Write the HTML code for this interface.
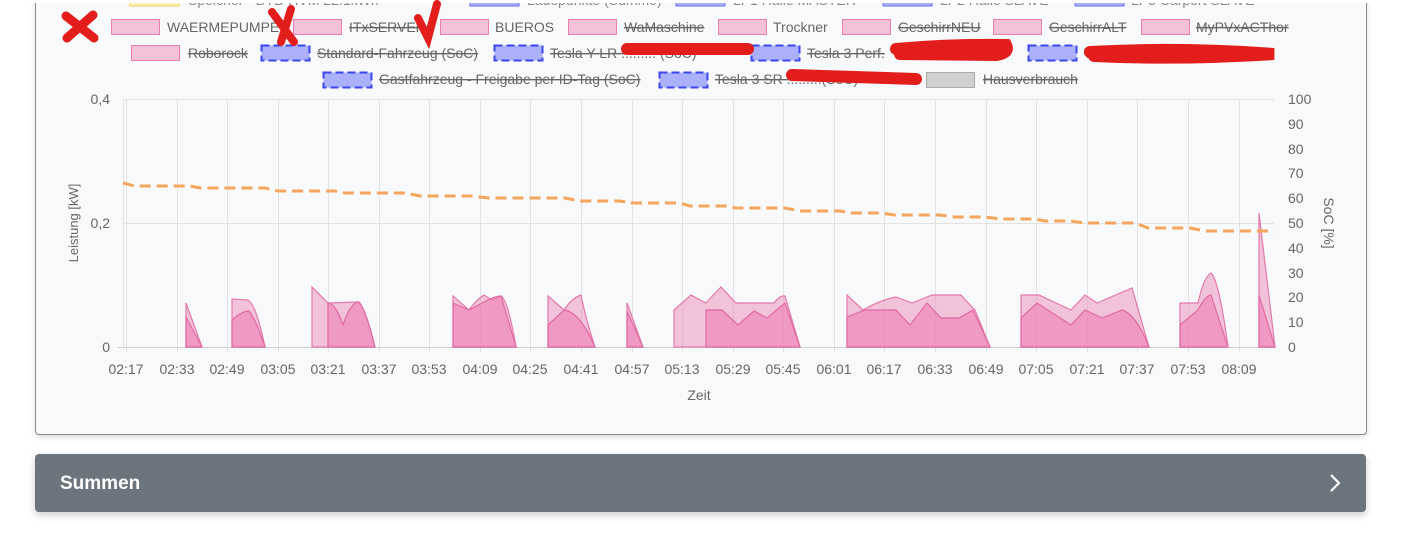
<!DOCTYPE html>
<html><head><meta charset="utf-8"><style>
html,body{margin:0;padding:0;background:#fff;width:1405px;height:547px;overflow:hidden;font-family:"Liberation Sans",sans-serif}
.card{position:absolute;left:35px;top:-10px;width:1330px;height:443px;background:#f8f9fa;border:1px solid #8a8a8a;border-radius:4px;box-shadow:0 2px 6px rgba(0,0,0,.15)}
.sum{position:absolute;left:35px;top:454px;width:1331px;height:58px;background:#6c757d;border-radius:4px;box-shadow:0 3px 8px rgba(0,0,0,.2)}
.sum span{position:absolute;left:25px;top:19px;color:#fff;font-weight:bold;font-size:19px}
svg{position:absolute;left:0;top:0}
</style></head><body>
<div class="card"></div>
<div class="sum"><span>Summen</span>
<svg style="left:1290px;top:18px" width="20" height="22"><path d="M6 3 L14 11 L6 19" fill="none" stroke="#fff" stroke-width="2.2"/></svg></div>
<svg width="1405" height="440" font-family="Liberation Sans, sans-serif">
<g font-size="14" fill="#666">
<rect x="130" y="-8" width="49" height="14" fill="#fdf3b8" stroke="#f0d060"/>
<rect x="470" y="-8" width="49" height="14" fill="#aab0fa" stroke="#6870ee"/>
<rect x="676" y="-8" width="49" height="14" fill="#aab0fa" stroke="#6870ee"/>
<rect x="883" y="-8" width="49" height="14" fill="#aab0fa" stroke="#6870ee"/>
<rect x="1075" y="-8" width="49" height="14" fill="#aab0fa" stroke="#6870ee"/>
<text x="188" y="5" fill="#888">Speicher - BYD HVM 22.1kWh</text>
<text x="527" y="5" fill="#888">Ladepunkte (Summe)</text>
<text x="733" y="5" fill="#888">LP1 Halle MASTER</text>
<text x="940" y="5" fill="#888">LP2 Halle SLAVE</text>
<text x="1131" y="5" fill="#888">LP3 Carport SLAVE</text>
<rect x="0" y="0" width="1405" height="3" fill="#fff"/>
<g fill="#f4c1d9" stroke="#e87fae">
<rect x="111.5" y="19.5" width="48" height="15"/><rect x="293.5" y="19.5" width="48" height="15"/><rect x="440.5" y="19.5" width="48" height="15"/><rect x="568.5" y="19.5" width="48" height="15"/><rect x="718.5" y="19.5" width="48" height="15"/><rect x="842.5" y="19.5" width="48" height="15"/><rect x="993.5" y="19.5" width="48" height="15"/><rect x="1141.5" y="19.5" width="48" height="15"/>
<rect x="131.5" y="45.5" width="48" height="15"/>
</g>
<text x="167" y="32">WAERMEPUMPE</text>
<text x="349" y="32" text-decoration="line-through">ITxSERVER</text>
<text x="495" y="32">BUEROS</text>
<text x="624" y="32" text-decoration="line-through">WaMaschine</text>
<text x="773" y="32">Trockner</text>
<text x="898" y="32" text-decoration="line-through">GeschirrNEU</text>
<text x="1049" y="32" text-decoration="line-through">GeschirrALT</text>
<text x="1196" y="32" text-decoration="line-through">MyPVxACThor</text>
<g fill="#aab0fa" stroke="#3a47ee" stroke-width="2" stroke-dasharray="8,4">
<rect x="261.5" y="45.5" width="48" height="15"/><rect x="494.5" y="45.5" width="48" height="15"/><rect x="751.5" y="45.5" width="48" height="15"/><rect x="1028.5" y="45.5" width="48" height="15"/>
<rect x="323.5" y="72.5" width="48" height="15"/><rect x="659.5" y="72.5" width="48" height="15"/>
</g>
<rect x="926.5" y="72.5" width="48" height="15" fill="#d0d0d0" stroke="#aaa"/>
<text x="188" y="58" text-decoration="line-through">Roborock</text>
<text x="317" y="58" text-decoration="line-through">Standard-Fahrzeug (SoC)</text>
<text x="550" y="58" text-decoration="line-through">Tesla Y LR ......... (SoC)</text>
<text x="807" y="58" text-decoration="line-through">Tesla 3 Perf.</text>
<text x="1084" y="58" text-decoration="line-through">W...................... (SoC)</text>
<text x="379" y="84" text-decoration="line-through">Gastfahrzeug - Freigabe per ID-Tag (SoC)</text>
<text x="715" y="84" text-decoration="line-through">Tesla 3 SR .........(SoC)</text>
<text x="983" y="84" text-decoration="line-through">Hausverbrauch</text>
</g>
<g stroke="#e31c1c" stroke-linecap="round" fill="none">
<path d="M66 16 L94 38 M93 15 L67 38" stroke-width="9"/>
<path d="M272 12 L294 42 M291 9 L281 42" stroke-width="8"/>
<path d="M418 18 L428 38 L437 4" stroke-width="8"/>
<path d="M627 49 L748 49" stroke-width="12"/>
<path d="M896 49 Q950 44 1006 45 Q1010 53 996 55 L900 54" stroke-width="12"/>
<path d="M1090 52 Q1180 47 1274 54 Q1180 60 1094 56" stroke-width="12"/>
<path d="M792 75 L916 79" stroke-width="12"/>
</g>
<g stroke="#e3e3e3" stroke-width="1">
<line x1="123" y1="99.5" x2="1274" y2="99.5"/><line x1="123" y1="223.5" x2="1274" y2="223.5"/>
<path d="M126.5 99V352M177.5 99V352M227.5 99V352M278.5 99V352M328.5 99V352M379.5 99V352M429.5 99V352M480.5 99V352M530.5 99V352M581.5 99V352M632.5 99V352M682.5 99V352M733.5 99V352M783.5 99V352M834.5 99V352M884.5 99V352M935.5 99V352M986.5 99V352M1036.5 99V352M1087.5 99V352M1137.5 99V352M1188.5 99V352M1239.5 99V352"/>
<line x1="123.5" y1="99" x2="123.5" y2="347"/>
</g>
<line x1="118" y1="347.5" x2="1274" y2="347.5" stroke="#cfcfcf"/>
<g fill="rgba(236,140,186,0.5)" stroke="#e27aaa" stroke-width="1.2">
<path d="M186 347 L186 303 L202 347Z"/>
<path d="M232 347 L232 299 L248 300 Q256 304 265 347Z"/>
<path d="M312 347 L312 287 L328 303 L359 302 Q366 310 375 347Z"/>
<path d="M453 347 L453 296 L469 310 Q476 300 484 295 L492 300 L501 296 Q508 300 516 347Z"/>
<path d="M548 347 L548 296 L564 310 Q572 298 581 295 Q586 320 595 347Z"/>
<path d="M627 347 L627 303 L643 347Z"/>
<path d="M674 347 L674 310 L691 295 Q700 300 706 303 Q712 296 721 287 L736 303 L774 303 Q780 295 785 296 L800 347Z"/>
<path d="M847 347 L847 295 L863 310 Q880 300 896 297 L912 303 L932 295 L961 295 Q967 302 975 310 L990 347Z"/>
<path d="M1021 347 L1021 295 L1039 295 L1071 310 L1085 295 L1097 303 L1132 288 L1149 347Z"/>
<path d="M1180 347 L1180 303 L1198 303 Q1204 276 1211 273 Q1219 280 1228 347Z"/>
<path d="M1259 347 L1259 213 L1275 347Z"/>
</g>
<g fill="rgba(236,120,178,0.55)" stroke="#e06aa2" stroke-width="1.2">
<path d="M186 347 L186 317 L202 347Z"/>
<path d="M232 347 L232 320 Q242 311 249 311 Q256 320 265 347Z"/>
<path d="M328 347 L328 303 Q336 304 343 325 Q350 303 359 302 Q366 310 375 347Z"/>
<path d="M453 347 L453 303 L469 310 L484 302 Q495 296 501 296 L516 347Z"/>
<path d="M548 347 L548 325 L564 310 Q580 312 595 347Z"/>
<path d="M627 347 L627 311 L643 347Z"/>
<path d="M706 347 L706 310 L722 310 L738 325 L754 311 L767 318 L785 303 L800 347Z"/>
<path d="M847 347 L847 317 L865 310 L896 310 L910 325 L927 303 L941 318 L959 318 L973 310 L990 347Z"/>
<path d="M1021 347 L1021 318 L1037 303 L1071 325 L1085 310 L1102 318 L1122 310 Q1136 314 1149 347Z"/>
<path d="M1180 347 L1180 325 L1198 310 Q1205 296 1211 295 L1228 347Z"/>
<path d="M1259 347 L1259 295 L1275 347Z"/>
</g>
<path d="M123 183 L135 186 L190 186 L200 188 L265 188 L278 191 L335 191 L345 193 L405 193 L420 196 L470 196 L490 198 L565 198 L580 201 L620 201 L630 203 L680 203 L690 206 L725 206 L735 208 L785 208 L800 211 L840 211 L850 213 L880 213 L895 215 L940 215 L955 217 L985 217 L1000 219 L1035 219 L1045 221 L1070 221 L1085 223 L1135 223 L1148 228 L1190 228 L1205 231 L1274 231" fill="none" stroke="#f5a55c" stroke-width="3" stroke-dasharray="11,6"/>
<g font-size="14" fill="#666">
<text x="110" y="104" text-anchor="end">0,4</text>
<text x="110" y="228" text-anchor="end">0,2</text>
<text x="110" y="352" text-anchor="end">0</text>
<g text-anchor="start">
<text x="1288" y="352">0</text><text x="1288" y="327">10</text><text x="1288" y="302">20</text><text x="1288" y="278">30</text><text x="1288" y="253">40</text><text x="1288" y="228">50</text><text x="1288" y="203">60</text><text x="1288" y="178">70</text><text x="1288" y="154">80</text><text x="1288" y="129">90</text><text x="1288" y="104">100</text>
</g>
<g text-anchor="middle">
<text x="126" y="374">02:17</text><text x="177" y="374">02:33</text><text x="227" y="374">02:49</text><text x="278" y="374">03:05</text><text x="328" y="374">03:21</text><text x="379" y="374">03:37</text><text x="429" y="374">03:53</text><text x="480" y="374">04:09</text><text x="530" y="374">04:25</text><text x="581" y="374">04:41</text><text x="632" y="374">04:57</text><text x="682" y="374">05:13</text><text x="733" y="374">05:29</text><text x="783" y="374">05:45</text><text x="834" y="374">06:01</text><text x="884" y="374">06:17</text><text x="935" y="374">06:33</text><text x="986" y="374">06:49</text><text x="1036" y="374">07:05</text><text x="1087" y="374">07:21</text><text x="1137" y="374">07:37</text><text x="1188" y="374">07:53</text><text x="1239" y="374">08:09</text>
<text x="699" y="400">Zeit</text>
<text transform="translate(78 223) rotate(-90)" font-size="13">Leistung [kW]</text>
<text transform="translate(1324 223) rotate(90)">SoC [%]</text>
</g>
</g>
</svg>
</body></html>
